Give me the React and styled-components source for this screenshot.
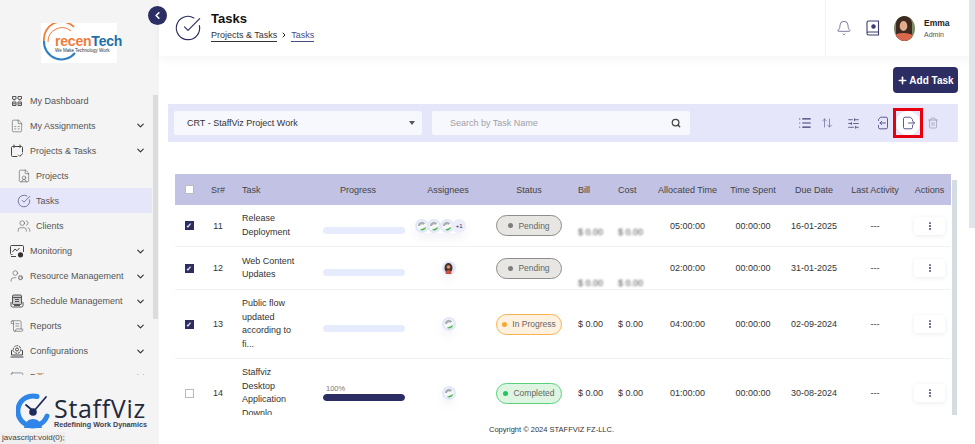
import styled, { createGlobalStyle } from "styled-components";
import {
  ArrowUpDown,
  Bell,
  ChevronDown,
  ChevronLeft,
  ChevronRight,
  CircleCheckBig,
  CreditCard,
  EllipsisVertical,
  FileSpreadsheet,
  FileUser,
  List,
  Plus,
  ScrollText,
  Search,
  SlidersHorizontal,
  Trash2,
  UserCog,
  Users,
} from "lucide-react";

const NAVY = "#2b2d63";
const COLUMNS = "28px 30px 82px 98px 70px 92px 40px 40px 65px 66px 56px 66px 43px";

function DashboardIcon() {
  return (
    <svg width="14" height="14" viewBox="0 0 14 14" fill="none" stroke="#555" strokeWidth="1">
      <path d="M2.500 2.500h3.500v2.500H4.800v1H3.700v-1H2.500zM8 2.500h3.500v2.500h-1.200v1H9.200v-1H8z" />
      <path d="M2.500 8h3.500v3.500H2.500zM8 8h3.500v3.500H8zM3 9.800h2.500M8.500 9.800H11" />
    </svg>
  );
}

function ClipboardTickIcon() {
  return (
    <svg width="14" height="14" viewBox="0 0 14 14" fill="none" stroke="#444" strokeWidth="1" strokeLinecap="round">
      <path d="M7 12.500H2.500A1 1 0 0 1 1.500 11.500V3.500a1 1 0 0 1 1-1h9a1 1 0 0 1 1 1V8" />
      <path d="M4 1v2.500M10 1v2.500M5.500 2.500h3" />
      <path d="m8.500 11 1.300 1.300L12.500 9.800" />
    </svg>
  );
}

function MonitorIcon() {
  return (
    <svg width="14" height="14" viewBox="0 0 14 14" fill="none" stroke="#444" strokeWidth="1">
      <path d="M2.500 10.500H1.500a1 1 0 0 1-1-1V2.500a1 1 0 0 1 1-1h11a1 1 0 0 1 1 1V8" />
      <path d="m2.500 8 2.500-3 2 1.800L9.500 4" />
      <path d="M1 12.500h5" />
      <circle cx="10.500" cy="10.800" r="2.600" fill="#333" stroke="none" />
    </svg>
  );
}

function ScheduleIcon() {
  return (
    <svg width="14" height="14" viewBox="0 0 14 14" fill="none" stroke="#555" strokeWidth="1">
      <rect x="2.500" y="1" width="9" height="9.500" rx="1" fill="#c9c9c9" />
      <path d="M2.500 3.500h9M5 5.500h4M5 7.500h4" />
      <path d="M1 8v3.500A1.500 1.500 0 0 0 2.500 13h9a1.500 1.500 0 0 0 1.500-1.500V8" />
      <path d="M4 11.500h6" />
    </svg>
  );
}

function ConfigIcon() {
  return (
    <svg width="14" height="14" viewBox="0 0 14 14" fill="none" stroke="#444" strokeWidth="1">
      <circle cx="7" cy="5.500" r="3.800" strokeDasharray="2 0.800" />
      <circle cx="7" cy="5.500" r="1.500" />
      <path d="M2.500 6.500H1.500v4.500h11V6.500h-1M.5 13h13" />
    </svg>
  );
}

const navItems = [
  { label: "My Dashboard", icon: DashboardIcon },
  { label: "My Assignments", icon: FileSpreadsheet, arrow: true },
  { label: "Projects & Tasks", icon: ClipboardTickIcon, arrow: true },
  { label: "Projects", icon: FileUser, sub: true },
  { label: "Tasks", icon: CircleCheckBig, sub: true, active: true },
  { label: "Clients", icon: Users, sub: true },
  { label: "Monitoring", icon: MonitorIcon, arrow: true },
  { label: "Resource Management", icon: UserCog, arrow: true },
  { label: "Schedule Management", icon: ScheduleIcon, arrow: true },
  { label: "Reports", icon: ScrollText, arrow: true },
  { label: "Configurations", icon: ConfigIcon, arrow: true },
  { label: "Billing", icon: CreditCard, arrow: true },
];

const tasks = [
  { sr: 11, name: ["Release", "Deployment"], checked: true, people: "many", status: "Pending", blur: 6, alloc: "05:00:00", due: "16-01-2025", height: 42 },
  { sr: 12, name: ["Web Content", "Updates"], checked: true, people: "photo", status: "Pending", blur: 15, alloc: "02:00:00", due: "31-01-2025", height: 43 },
  { sr: 13, name: ["Public flow", "updated", "according to", "fi..."], checked: true, people: "one", status: "In Progress", alloc: "04:00:00", due: "02-09-2024", height: 69 },
  { sr: 14, name: ["Staffviz", "Desktop", "Application", "Downlo"], people: "one", status: "Completed", progress: 100, alloc: "01:00:00", due: "30-08-2024", height: 69 },
];

const statusColors = {
  Pending: { bg: "#e8e6e3", border: "#8d8d8d", dot: "#7d7d7d" },
  "In Progress": { bg: "#fff1e0", border: "#f6b24e", dot: "#f6a733" },
  Completed: { bg: "#def5e2", border: "#57d27b", dot: "#22c55e" },
};

function PersonDot() {
  return (
    <AvatarRing>
      <svg width="10" height="10" viewBox="0 0 10 10">
        <circle cx="5" cy="5" r="5" fill="#f6f7f6" />
        <path d="M.8 5a4.200 4.200 0 0 1 7.400-2.700L6.500 3.700A2.200 2.200 0 0 0 3 5z" fill="#a7afb5" />
        <path d="M2.800 8.800A4.400 4.400 0 0 0 9.300 5.500C8 7 5.500 7.800 2.800 8.800z" fill="#56b35a" />
      </svg>
    </AvatarRing>
  );
}

function PhotoDot() {
  return (
    <AvatarRing>
      <svg width="9" height="11" viewBox="0 0 9 11">
        <ellipse cx="4.500" cy="5" rx="4" ry="5" fill="#4a2e22" />
        <circle cx="4.500" cy="4" r="1.800" fill="#d99a7a" />
        <path d="M1.500 11c0-3 1.500-4 3-4s3 1 3 4z" fill="#c9503c" />
      </svg>
    </AvatarRing>
  );
}

function ExportIcon() {
  return (
    <svg width="13" height="14" viewBox="0 0 13 14" fill="none" stroke="#5a5c90" strokeWidth="1" strokeLinecap="round" strokeLinejoin="round">
      <path d="M10.500 4.500V3.500L8.500 1.200H3A1.500 1.500 0 0 0 1.500 2.700v8.600A1.500 1.500 0 0 0 3 12.800h6A1.500 1.500 0 0 0 10.500 11.300V9.500" />
      <path d="M6.500 7h6M10.800 5.300 12.500 7l-1.700 1.700" />
    </svg>
  );
}

function ImportIcon() {
  return (
    <svg width="13" height="14" viewBox="0 0 13 14" fill="none" stroke="#5a5c90" strokeWidth="1" strokeLinecap="round" strokeLinejoin="round">
      <path d="M2.500 4.500V3.500L4.500 1.200H10A1.500 1.500 0 0 1 11.500 2.700v8.600A1.500 1.500 0 0 1 10 12.800H4A1.500 1.500 0 0 1 2.500 11.300V9.500" />
      <path d="M9.500 7H4M5.700 5.300 4 7l1.700 1.700" />
    </svg>
  );
}

function BookIcon() {
  return (
    <svg width="14" height="16" viewBox="0 0 14 16" fill="none" stroke="#3b3d6e" strokeWidth="1.100">
      <path d="M2.500 1h10v11h-10A1.500 1.500 0 0 0 1 13.500v-11A1.500 1.500 0 0 1 2.500 1z" />
      <path d="M1 13.500A1.500 1.500 0 0 0 2.500 15h10v-3" />
      <circle cx="7.500" cy="6.500" r="1.700" fill="#3b3d6e" />
    </svg>
  );
}

function EmmaPhoto() {
  return (
    <svg width="21" height="25" viewBox="1 0 21 25">
      <defs>
        <clipPath id="emma">
          <ellipse cx="11.500" cy="12.500" rx="10.500" ry="12.500" />
        </clipPath>
      </defs>
      <g clipPath="url(#emma)">
        <rect width="23" height="25" fill="#7d8a66" />
        <path d="M3 25V8c0-5 3.500-8 8-8s8 3 8 8v17z" fill="#3d2a20" />
        <ellipse cx="10.500" cy="10" rx="3.800" ry="5" fill="#e0ac8c" />
        <path d="M0 25c0-6 4-8 10-8s13 2 13 8z" fill="#d8694e" />
      </g>
    </svg>
  );
}

function RecenLogo() {
  return (
    <LogoBox>
      <LogoArcs width="40" height="40" viewBox="0 0 40 40" fill="none">
        <path d="M33 4A17.500 17.500 0 0 0 3 18" stroke="#ef7d3c" strokeWidth="1.800" />
        <path d="M3 18a17.500 17.500 0 0 0 31 12" stroke="#2f7fc1" strokeWidth="2" />
        <path d="M30 8A14 14 0 0 0 7 19" stroke="#ef7d3c" strokeWidth="1" />
      </LogoArcs>
      <LogoName>
        <LogoOrange>recen</LogoOrange>
        <LogoBlue>Tech</LogoBlue>
      </LogoName>
      <LogoTagline>We Make Technology Work</LogoTagline>
    </LogoBox>
  );
}

function StaffVizLogo() {
  return (
    <BrandRow>
      <svg width="35" height="36" viewBox="0 0 35 36" fill="none">
        <path d="M21 3.500A15 15 0 1 0 31 23" stroke="#2f86e8" strokeWidth="5" strokeLinecap="round" />
        <path d="M18 18 30 4" stroke="#1f2a5a" strokeWidth="1.800" strokeLinecap="round" />
        <path d="M10 12l6 5" stroke="#1f2a5a" strokeWidth="1.800" strokeLinecap="round" />
        <circle cx="17" cy="19" r="3.800" fill="#1f2a5a" />
        <path d="M8 35c1-6 4.500-9 9-9s8 3 9 9z" fill="#2f86e8" />
      </svg>
      <BrandText>
        <BrandName>StaffViz</BrandName>
        <BrandTagline>Redefining Work Dynamics</BrandTagline>
      </BrandText>
    </BrandRow>
  );
}

function Assignees({ kind }) {
  if (kind === "many") {
    return (
      <AvatarStack $shift>
        <PersonDot />
        <PersonDot />
        <PersonDot />
        <MoreDot>+1</MoreDot>
      </AvatarStack>
    );
  }
  return <AvatarStack>{kind === "photo" ? <PhotoDot /> : <PersonDot />}</AvatarStack>;
}

function TaskRow({ task }) {
  const colors = statusColors[task.status];
  return (
    <Row $height={task.height}>
      <Cell>
        <CheckBox $checked={task.checked}>{task.checked && "✓"}</CheckBox>
      </Cell>
      <Cell>{task.sr}</Cell>
      <TaskName>
        {task.name.map((line) => (
          <div key={line}>{line}</div>
        ))}
      </TaskName>
      <Cell>
        <ProgressWrap>
          <ProgressLabel>{task.progress ? `${task.progress}%` : ""}</ProgressLabel>
          <ProgressTrack>
            <ProgressFill style={{ width: `${task.progress || 0}%` }} />
          </ProgressTrack>
        </ProgressWrap>
      </Cell>
      <Cell>
        <Assignees kind={task.people} />
      </Cell>
      <Cell>
        <StatusPill $bg={colors.bg} $border={colors.border}>
          <StatusDot $color={colors.dot} />
          {task.status}
        </StatusPill>
      </Cell>
      <MoneyCell $blur={task.blur}>$ 0.00</MoneyCell>
      <MoneyCell $blur={task.blur}>$ 0.00</MoneyCell>
      <Cell>{task.alloc}</Cell>
      <Cell>00:00:00</Cell>
      <Cell>{task.due}</Cell>
      <Cell>---</Cell>
      <Cell>
        <ActionButton>
          <EllipsisVertical size={10} color={NAVY} strokeWidth={2.500} />
        </ActionButton>
      </Cell>
    </Row>
  );
}

export default function App() {
  return (
    <>
      <GlobalStyle />
      <Page>
        <Sidebar>
          <LogoArea>
            <RecenLogo />
          </LogoArea>
          <NavArea>
            <NavList>
              {navItems.map(({ label, icon: Icon, arrow, sub, active }) => (
                <NavItem key={label} $sub={sub} $active={active}>
                  <Icon size={14} strokeWidth={1} color={active ? NAVY : "#555"} />
                  <NavLabel>{label}</NavLabel>
                  {arrow && <NavArrow size={11} strokeWidth={2.500} />}
                </NavItem>
              ))}
            </NavList>
            <SideThumb />
          </NavArea>
          <StaffVizLogo />
        </Sidebar>

        <CollapseButton>
          <ChevronLeft size={11} color="#fff" strokeWidth={3.500} />
        </CollapseButton>

        <Main>
          <Header>
            <CircleCheckBig size={28} strokeWidth={1} color={NAVY} />
            <HeaderTitles>
              <Title>Tasks</Title>
              <Breadcrumb>
                <Crumb>Projects &amp; Tasks</Crumb>
                <ChevronRight size={8} strokeWidth={3} color="#222" />
                <Crumb $current>Tasks</Crumb>
              </Breadcrumb>
            </HeaderTitles>
            <HeaderRight>
              <Bell size={16} strokeWidth={1} color="#3b3d6e" />
              <BookIcon />
              <EmmaPhoto />
              <UserInfo>
                <UserName>Emma</UserName>
                <UserRole>Admin</UserRole>
              </UserInfo>
            </HeaderRight>
          </Header>

          <Content>
            <AddRow>
              <AddButton>
                <Plus size={11} strokeWidth={3.500} />
                Add Task
              </AddButton>
            </AddRow>

            <FilterBar>
              <ProjectSelect>
                CRT - StaffViz Project Work
                <SelectCaret />
              </ProjectSelect>
              <SearchBox>
                Search by Task Name
                <Search size={10} strokeWidth={3} color="#444" />
              </SearchBox>
              <ToolIcons>
                <ToolButton $width={18}>
                  <List size={14} strokeWidth={2} color="#3b3d6e" />
                </ToolButton>
                <ToolButton>
                  <ArrowUpDown size={12} strokeWidth={1.300} color="#5a5c90" />
                </ToolButton>
                <ToolButton>
                  <SlidersHorizontal size={13} strokeWidth={1.400} color="#3b3d6e" />
                </ToolButton>
                <ToolGap />
                <ToolButton $width={22}>
                  <ImportIcon />
                </ToolButton>
                <HighlightBox>
                  <ExportCircle>
                    <ExportIcon />
                  </ExportCircle>
                </HighlightBox>
                <ToolButton $width={20}>
                  <Trash2 size={12} strokeWidth={1.200} color="#8c8ea8" />
                </ToolButton>
              </ToolIcons>
            </FilterBar>

            <TableArea>
              <TableClip>
                <HeadRow>
                  <Cell>
                    <CheckBox />
                  </Cell>
                  <Cell>Sr#</Cell>
                  <TaskHead>Task</TaskHead>
                  <ProgressHead>Progress</ProgressHead>
                  <Cell>Assignees</Cell>
                  <Cell>Status</Cell>
                  <MoneyHead>Bill</MoneyHead>
                  <MoneyHead>Cost</MoneyHead>
                  <Cell>Allocated Time</Cell>
                  <Cell>Time Spent</Cell>
                  <Cell>Due Date</Cell>
                  <Cell>Last Activity</Cell>
                  <Cell>Actions</Cell>
                </HeadRow>
                {tasks.map((task) => (
                  <TaskRow key={task.sr} task={task} />
                ))}
              </TableClip>
              <TableThumb />
            </TableArea>

            <Footer>Copyright © 2024 STAFFVIZ FZ-LLC.</Footer>
          </Content>
        </Main>

        <PageThumb />
        <LinkTip>javascript:void(0);</LinkTip>
      </Page>
    </>
  );
}

const GlobalStyle = createGlobalStyle`
  html, body {
    margin: 0;
    height: 100%;
    overflow: hidden;
    background: #fff;
  }
  * {
    box-sizing: border-box;
  }
`;

const Page = styled.div`
  position: relative;
  width: 975px;
  height: 444px;
  display: flex;
  overflow: hidden;
  font-family: "Liberation Sans", Arial, sans-serif;
  font-size: 9px;
  color: #222;
`;

const Sidebar = styled.aside`
  width: 159px;
  flex-shrink: 0;
  display: flex;
  flex-direction: column;
  background: #f4f4f4;
`;

const LogoArea = styled.div`
  height: 88px;
  padding: 23px 0 0 41px;
`;

const LogoBox = styled.div`
  position: relative;
  width: 76px;
  height: 40px;
  background: #fff;
  padding: 11px 0 0 14px;
`;

const LogoArcs = styled.svg`
  position: absolute;
  left: 0;
  top: 0;
`;

const LogoName = styled.div`
  position: relative;
  font-size: 14px;
  line-height: 14px;
  font-weight: 700;
  white-space: nowrap;
  letter-spacing: -0.2px;
`;

const LogoOrange = styled.span`
  color: #ef7d3c;
`;

const LogoBlue = styled.span`
  color: #1f6fa8;
`;

const LogoTagline = styled.div`
  position: relative;
  font-size: 4.500px;
  line-height: 6px;
  color: #333;
  white-space: nowrap;
`;

const NavArea = styled.div`
  height: 287px;
  display: flex;
  overflow: hidden;
`;

const NavList = styled.nav`
  width: 152px;
  flex-shrink: 0;
`;

const NavItem = styled.div`
  height: 25.100px;
  display: flex;
  align-items: center;
  gap: ${(props) => (props.$sub ? "5px" : "6px")};
  padding: 0 6px 0 ${(props) => (props.$sub ? "17px" : "10px")};
  background: ${(props) => (props.$active ? "#e6e6fa" : "transparent")};
  color: #555;
`;

const NavLabel = styled.span`
  flex: 1;
  white-space: nowrap;
`;

const NavArrow = styled(ChevronDown)`
  color: #333;
`;

const SideThumb = styled.div`
  width: 5px;
  height: 224px;
  margin: 7px 0 0 1px;
  background: #dcdcdc;
`;

const BrandRow = styled.div`
  display: flex;
  align-items: flex-start;
  gap: 3px;
  padding: 18px 0 0 16px;
`;

const BrandText = styled.div`
  padding-top: 3px;
`;

const BrandName = styled.div`
  font-size: 25px;
  line-height: 25px;
  letter-spacing: 0.700px;
  color: #1f2a3c;
  font-family: "Open Sans", "Liberation Sans", sans-serif;
`;

const BrandTagline = styled.div`
  font-size: 7.200px;
  line-height: 8px;
  font-weight: 700;
  color: #3b4254;
  white-space: nowrap;
`;

const CollapseButton = styled.div`
  position: absolute;
  left: 148px;
  top: 6px;
  width: 19px;
  height: 19px;
  border-radius: 50%;
  background: ${NAVY};
  display: flex;
  align-items: center;
  justify-content: center;
  z-index: 3;
`;

const Main = styled.main`
  flex: 1;
  min-width: 0;
  display: flex;
  flex-direction: column;
`;

const Header = styled.header`
  height: 56px;
  flex-shrink: 0;
  display: flex;
  align-items: center;
  gap: 9px;
  padding-left: 15px;
  background: #fff;
  box-shadow: 0 4px 10px rgba(0, 0, 0, 0.04);
`;

const HeaderTitles = styled.div`
  display: flex;
  flex-direction: column;
  gap: 3px;
  padding-bottom: 4px;
`;

const Title = styled.div`
  font-size: 13px;
  font-weight: 700;
  line-height: 15px;
  color: #111;
`;

const Breadcrumb = styled.div`
  display: flex;
  align-items: center;
  gap: 3px;
  font-size: 9px;
`;

const Crumb = styled.span`
  color: ${(props) => (props.$current ? "#4a4c86" : "#333")};
  border-bottom: 1px solid ${(props) => (props.$current ? "#4a4c86" : "#333")};
  line-height: 12px;
`;

const HeaderRight = styled.div`
  margin-left: auto;
  width: 150px;
  height: 56px;
  display: flex;
  align-items: center;
  gap: 14px;
  padding-left: 10px;
  border-left: 1px solid #f3f3f3;
`;

const UserInfo = styled.div`
  margin-left: -5px;
  display: flex;
  flex-direction: column;
  gap: 3px;
`;

const UserName = styled.div`
  font-size: 8.500px;
  font-weight: 700;
  color: #222;
`;

const UserRole = styled.div`
  font-size: 7px;
  color: #555;
`;

const Content = styled.div`
  flex: 1;
  min-height: 0;
  display: flex;
  flex-direction: column;
  padding: 11px 17px 0 9px;
`;

const AddRow = styled.div`
  display: flex;
  justify-content: flex-end;
`;

const AddButton = styled.div`
  width: 65px;
  height: 26px;
  border-radius: 4px;
  background: ${NAVY};
  color: #fff;
  font-size: 10px;
  font-weight: 700;
  display: flex;
  align-items: center;
  justify-content: center;
  gap: 1px;
`;

const FilterBar = styled.div`
  height: 38px;
  margin-top: 11px;
  display: flex;
  align-items: center;
  padding-left: 6px;
  background: #e6e6fa;
`;

const ProjectSelect = styled.div`
  width: 248px;
  height: 24px;
  display: flex;
  align-items: center;
  justify-content: space-between;
  padding: 0 4px 0 13px;
  border-radius: 2px;
  background: #f7f7fe;
  font-size: 9px;
  color: #333;
`;

const SelectCaret = styled.span`
  width: 0;
  height: 0;
  margin-right: 3px;
  border-left: 3.500px solid transparent;
  border-right: 3.500px solid transparent;
  border-top: 4px solid #555;
`;

const SearchBox = styled.div`
  width: 258px;
  height: 24px;
  margin-left: 10px;
  display: flex;
  align-items: center;
  justify-content: space-between;
  padding: 0 9px 0 18px;
  border-radius: 2px;
  background: #f7f7fe;
  font-size: 9px;
  color: #a0a0a8;
`;

const ToolIcons = styled.div`
  margin-left: auto;
  display: flex;
  align-items: center;
  padding-right: 15px;
`;

const ToolButton = styled.div`
  width: ${(props) => props.$width || 26}px;
  display: flex;
  justify-content: center;
`;

const ToolGap = styled.div`
  width: 5px;
`;

const HighlightBox = styled.div`
  width: 30px;
  height: 30px;
  display: flex;
  align-items: center;
  justify-content: center;
  border: 3px solid #e8000f;
`;

const ExportCircle = styled.div`
  width: 24px;
  height: 24px;
  border-radius: 50%;
  background: #fff;
  display: flex;
  align-items: center;
  justify-content: center;
`;

const TableArea = styled.div`
  height: 241px;
  margin-top: 32px;
  margin-left: 7px;
  margin-right: -1px;
  display: flex;
  gap: 1px;
  overflow: hidden;
`;

const TableClip = styled.div`
  width: 776px;
  flex-shrink: 0;
`;

const TableThumb = styled.div`
  width: 5px;
  margin-top: 6px;
  background: #d4dde2;
`;

const HeadRow = styled.div`
  display: grid;
  grid-template-columns: ${COLUMNS};
  height: 31px;
  background: #c2c2e4;
  color: #444;
`;

const Row = styled.div`
  display: grid;
  grid-template-columns: ${COLUMNS};
  height: ${(props) => props.$height}px;
  border-bottom: 1px solid #f1f1f4;
  color: #333;
`;

const Cell = styled.div`
  display: flex;
  align-items: center;
  justify-content: center;
  white-space: nowrap;
`;

const TaskHead = styled(Cell)`
  justify-content: flex-start;
  padding-left: 9px;
`;

const ProgressHead = styled(Cell)`
  padding-right: 12px;
`;

const MoneyHead = styled(Cell)`
  justify-content: flex-start;
  padding-left: 3px;
`;

const MoneyCell = styled(MoneyHead)`
  filter: ${(props) => (props.$blur ? "blur(1.1px)" : "none")};
  transform: translateY(${(props) => props.$blur || 0}px);
  color: ${(props) => (props.$blur ? "#555" : "#333")};
`;

const TaskName = styled.div`
  display: flex;
  flex-direction: column;
  justify-content: center;
  padding-left: 9px;
  line-height: 13.500px;
  white-space: nowrap;
`;

const CheckBox = styled.span`
  width: 9px;
  height: 9px;
  display: flex;
  align-items: center;
  justify-content: center;
  border: 1px solid ${(props) => (props.$checked ? NAVY : "#bbb")};
  background: ${(props) => (props.$checked ? NAVY : "#fff")};
  color: #fff;
  font-size: 7px;
  font-weight: 700;
  line-height: 1;
`;

const ProgressWrap = styled.div`
  width: 82px;
  display: flex;
  flex-direction: column;
  gap: 2px;
`;

const ProgressLabel = styled.div`
  height: 7px;
  padding-left: 3px;
  font-size: 7.500px;
  line-height: 7px;
  color: #777;
`;

const ProgressTrack = styled.div`
  height: 7px;
  border-radius: 4px;
  background: #e6ecfd;
  overflow: hidden;
`;

const ProgressFill = styled.div`
  height: 100%;
  border-radius: 4px;
  background: ${NAVY};
`;

const AvatarStack = styled.div`
  display: flex;
  align-items: center;
  margin-right: ${(props) => (props.$shift ? "15px" : "0")};
  box-shadow: 0 5px 10px rgba(80, 90, 160, 0.07);
  border-radius: 8px;
`;

const AvatarRing = styled.span`
  width: 14px;
  height: 14px;
  margin-right: -1.500px;
  border-radius: 50%;
  background: #e2e8fb;
  display: flex;
  align-items: center;
  justify-content: center;
  overflow: hidden;
`;

const MoreDot = styled(AvatarRing)`
  background: #ececfb;
  color: ${NAVY};
  font-size: 6px;
  margin-right: 0;
`;

const StatusPill = styled.div`
  width: 66px;
  height: 21px;
  display: flex;
  align-items: center;
  justify-content: center;
  gap: 5px;
  border-radius: 11px;
  border: 1px solid ${(props) => props.$border};
  background: ${(props) => props.$bg};
  color: #666;
  font-size: 8.500px;
`;

const StatusDot = styled.span`
  width: 5px;
  height: 5px;
  border-radius: 50%;
  background: ${(props) => props.$color};
`;

const ActionButton = styled.div`
  width: 31px;
  height: 18px;
  border-radius: 3px;
  background: #fff;
  box-shadow: 0 1px 5px rgba(0, 0, 0, 0.08);
  display: flex;
  align-items: center;
  justify-content: center;
`;

const Footer = styled.footer`
  height: 29px;
  display: flex;
  align-items: center;
  justify-content: center;
  padding-right: 23px;
  font-size: 7.500px;
  color: #333;
`;

const PageThumb = styled.div`
  position: absolute;
  right: 0;
  top: 0;
  width: 6px;
  height: 228px;
  background: #e1e5ea;
`;

const LinkTip = styled.div`
  position: absolute;
  left: 0;
  bottom: 0;
  width: 66px;
  height: 12px;
  padding-left: 2px;
  border-top-right-radius: 3px;
  background: #efefef;
  font-size: 8px;
  line-height: 12px;
  color: #444;
  white-space: nowrap;
`;
